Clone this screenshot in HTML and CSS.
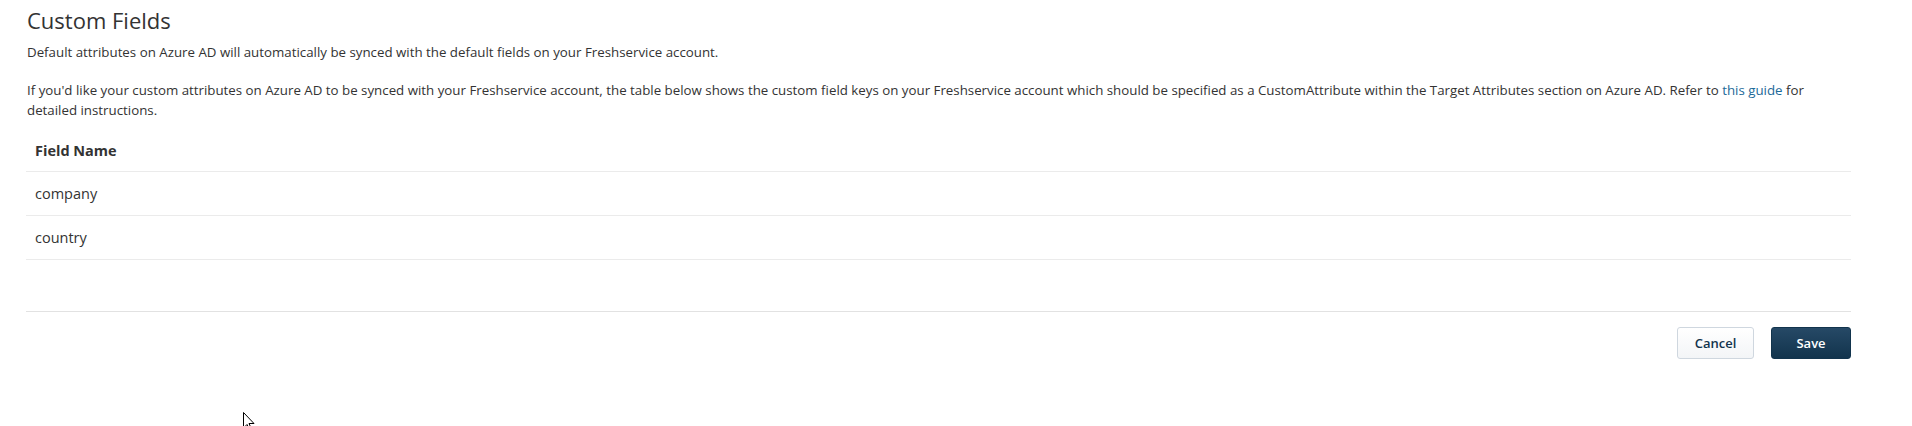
FILE: index.html
```html
<!DOCTYPE html>
<html>
<head>
<meta charset="utf-8">
<link rel="stylesheet" href="styles.css">
</head>
<body>
<div class="page">
  <h1 class="title">Custom Fields</h1>
  <p class="desc">Default attributes on Azure AD will automatically be synced with the default fields on your Freshservice account.</p>
  <p class="desc desc-2">If you'd like your custom attributes on Azure AD to be synced with your Freshservice account, the table below shows the custom field keys on your Freshservice account which should be specified as a CustomAttribute within the Target Attributes section on Azure AD. Refer to <a class="link" href="#">this guide</a> for detailed instructions.</p>
  <div class="table">
    <div class="row head">Field Name</div>
    <div class="row">company</div>
    <div class="row">country</div>
  </div>
  <div class="footer">
    <button class="btn btn-cancel">Cancel</button>
    <button class="btn btn-save">Save</button>
  </div>
</div>
<svg class="cursor" width="12" height="19" viewBox="0 0 12 19"><path d="M0.5 0.5 L0.5 16 L4 12.5 L6.5 18 L8.5 17 L6 11.5 L11 11.5 Z" fill="#fff" stroke="#000" stroke-width="1"/></svg>
</body>
</html>
```
FILE: styles.css
```css
html, body { margin: 0; padding: 0; background: #fff; }
body { font-family: "Open Sans", "Liberation Sans", sans-serif; color: #333; }
.page { padding: 5px 61px 0 26px; }
.title { font-size: 22px; font-weight: 400; margin: 0 0 0 1px; line-height: 30px; color: #333; }
.desc { font-size: 13.3px; line-height: 20px; margin: 7px 24px 0 1px; }
.desc-2 { margin-top: 18px; }
.link { color: #1d6a99; text-decoration: none; }
.table { margin-top: 10px; }
.row { height: 43px; line-height: 43px; padding-left: 9px; border-bottom: 1px solid #ebebeb; font-size: 14.5px; color: #333; }
.row.head { font-weight: 700; height: 41px; line-height: 41px; font-size: 14.5px; }
.footer { margin-top: 51px; border-top: 1px solid #e2e2e2; padding-top: 15px; display: flex; justify-content: flex-end; gap: 17px; }
.btn { height: 32px; border-radius: 3px; font-family: inherit; font-size: 13px; font-weight: 600; cursor: pointer; }
.btn-cancel { width: 77px; background: linear-gradient(#fff, #f3f5f7); border: 1px solid #cfd7df; color: #12344d; }
.btn-save { width: 80px; background: linear-gradient(#264966, #12344d); border: 1px solid #12344d; color: #fff; }
.cursor { position: absolute; left: 243px; top: 412px; }
```
